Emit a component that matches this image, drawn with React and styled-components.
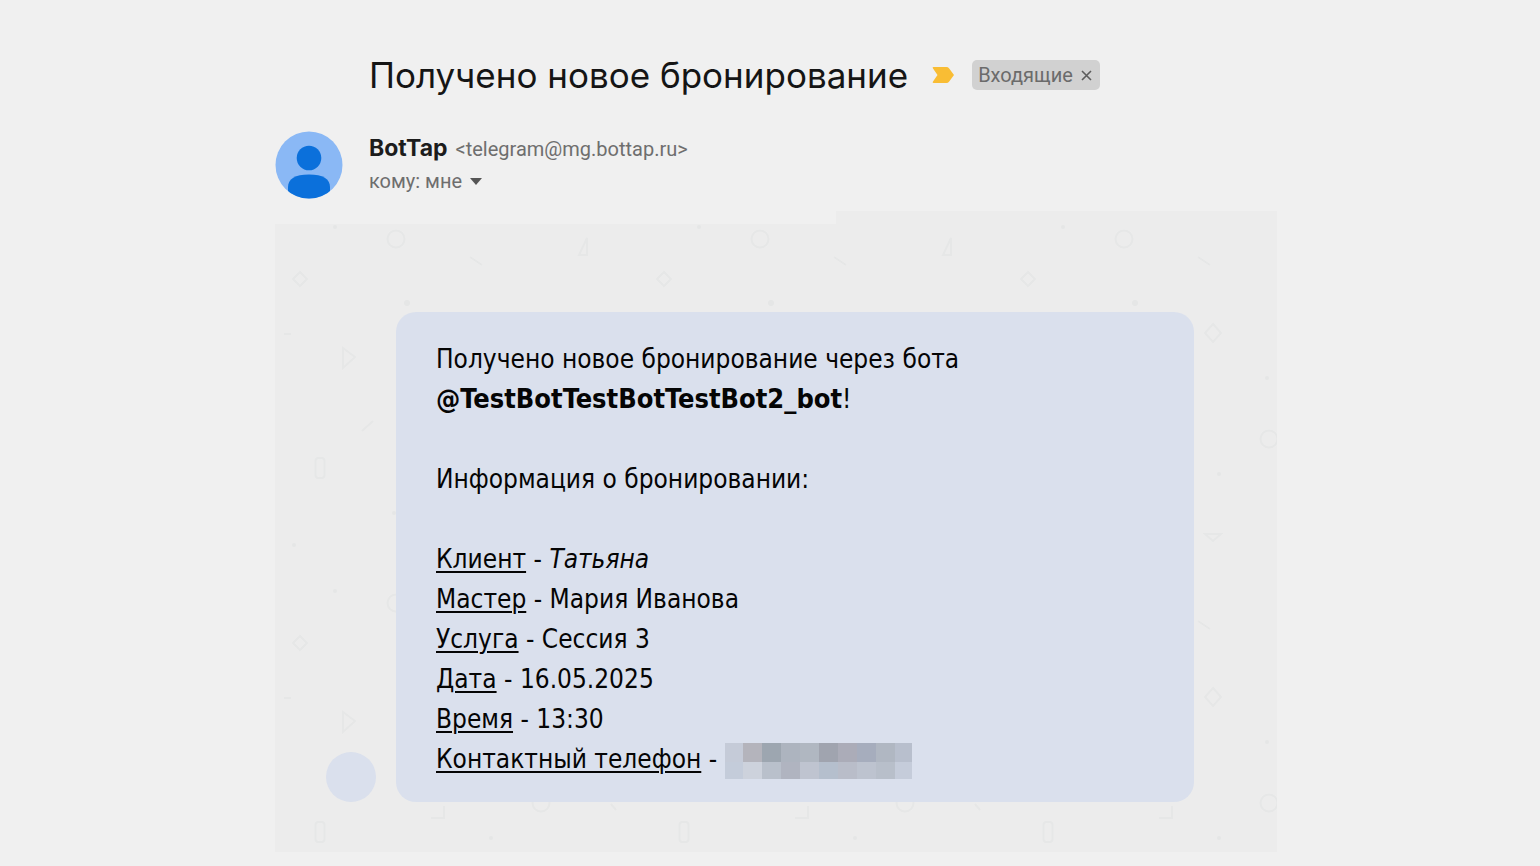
import styled, { createGlobalStyle } from 'styled-components'

const details = [
    { label: 'Клиент', value: <em>Татьяна</em> },
    { label: 'Мастер', value: 'Мария Иванова' },
    { label: 'Услуга', value: 'Сессия 3' },
    { label: 'Дата', value: '16.05.2025' },
    { label: 'Время', value: '13:30' },
]

// two rows of blurred blocks over the phone number
const phoneBlocks = [
    '#c5cbd8', '#b4b4bc', '#9da6b0', '#adb4bf', '#b0b7c1', '#a0a4af', '#abacb8', '#a6adbd', '#b0b7c2', '#b8bfcd',
    '#c4ccda', '#cdd2dc', '#b9c0cb', '#b0b4c0', '#bfc4d0', '#b5bfcd', '#b9bdc9', '#bdc3cf', '#b8bfca', '#c5ccda',
]

const Avatar = () => (
    <AvatarSvg viewBox="0 0 68 68" aria-hidden="true">
        <clipPath id="face"><circle cx="34" cy="34" r="33.500" /></clipPath>
        <circle cx="34" cy="34" r="33.500" fill="#8ab8f5" />
        <g clipPath="url(#face)" fill="#0b70db">
            <circle cx="34" cy="27" r="12.300" />
            <path d="M13 68V56C13 48 20 43.500 34 43.500S55 48 55 56V68Z" />
        </g>
    </AvatarSvg>
)

// faint doodles, repeated every 364px
const Doodles = () => (
    <DoodlesSvg aria-hidden="true">
        <defs>
            <pattern id="doodles" width="364" height="364" patternUnits="userSpaceOnUse">
                <g fill="none" stroke="#e6e7e7" strokeWidth="2">
                    <circle cx="121" cy="15" r="8.500" />
                    <path d="M304 31H312V14Z" />
                    <path d="M195 33L207 41" />
                    <path d="M25 48L32 55L25 62L18 55Z" />
                    <path d="M9 110H16" />
                    <path d="M68 124L80 133L68 144Z" />
                    <path d="M87 207L98 197" />
                    <rect x="40.500" y="234" width="9" height="20" rx="3" />
                    <path d="M210 100L218 109L210 118L202 109Z" />
                    <path d="M202 310H218L210 317Z" />
                    <circle cx="266" cy="215" r="8.500" />
                    <path d="M156 230H169V218" />
                    <path d="M336 216L341 222" />
                </g>
                <g fill="#e5e6e6">
                    <circle cx="60" cy="3" r="2" />
                    <circle cx="132" cy="79" r="3" />
                    <circle cx="119" cy="289" r="2" />
                    <circle cx="19" cy="321" r="2" />
                    <circle cx="264" cy="154" r="2" />
                    <circle cx="216" cy="250" r="2" />
                </g>
            </pattern>
        </defs>
        <rect width="100%" height="100%" fill="url(#doodles)" />
    </DoodlesSvg>
)

const App = () => {
    return (
        <Page>
            <GlobalStyle />
            <TitleRow>
                <Title>Получено новое бронирование</Title>
                <Marker viewBox="0 0 22 18" aria-hidden="true">
                    <path d="M1.500 1H14.500Q16 1 17 2.200L22 9L17 15.800Q16 17 14.500 17H1.500Q0 17 1 15.600L5.500 9L1 2.400Q0 1 1.500 1Z" fill="#f9bd34" />
                </Marker>
                <Label>
                    Входящие
                    <LabelClose type="button" aria-label="Убрать ярлык">
                        <svg width="11" height="11" viewBox="0 0 11 11">
                            <path d="M1 1L10 10M10 1L1 10" stroke="#5c5c5c" strokeWidth="1.600" />
                        </svg>
                    </LabelClose>
                </Label>
            </TitleRow>

            <Sender>
                <Avatar />
                <div>
                    <From>
                        <Name>BotTap</Name>
                        <span>&lt;telegram@mg.bottap.ru&gt;</span>
                    </From>
                    <Recipient type="button">
                        кому: мне
                        <svg width="12" height="7" viewBox="0 0 12 7">
                            <path d="M0 0H12L6 7Z" fill="#555" />
                        </svg>
                    </Recipient>
                </div>
            </Sender>

            <Ledge />
            <Chat>
                <Doodles />
                <BotPhoto />
                <Bubble>
                    <p>
                        Получено новое бронирование через бота<br />
                        <b>@TestBotTestBotTestBot2_bot</b>!
                    </p>
                    <p>Информация о бронировании:</p>
                    <ul>
                        {details.map((item) => (
                            <li key={item.label}><u>{item.label}</u> - {item.value}</li>
                        ))}
                        <li>
                            <u>Контактный телефон</u> -{' '}
                            <HiddenPhone>
                                {phoneBlocks.map((color, i) => <Block key={i} $color={color} />)}
                            </HiddenPhone>
                        </li>
                    </ul>
                </Bubble>
            </Chat>
        </Page>
    )
}

const GlobalStyle = createGlobalStyle`
* {
    box-sizing: border-box;
}
body {
    margin: 0;
    background: #f0f0f0;
    font-family: Roboto, "Liberation Sans", sans-serif;
}
h1, p, ul {
    margin: 0;
    padding: 0;
}
ul {
    list-style: none;
}
button {
    padding: 0;
    border: 0;
    background: none;
    color: inherit;
    font: inherit;
    cursor: pointer;
}
`

const Page = styled.main`
    padding: 52px 263px 14px 275px;
`

const TitleRow = styled.header`
    display: flex;
    align-items: center;
    padding-left: 94px;
`

const Title = styled.h1`
    color: #151515;
    font: 400 35px/46px Inter, sans-serif;
`

const Marker = styled.svg`
    width: 22px;
    height: 18px;
    margin: 0 18px 0 24px;
`

const Label = styled.span`
    display: flex;
    align-items: center;
    gap: 8px;
    height: 30px;
    padding: 0 8px 0 6px;
    border-radius: 5px;
    background: #d1d1d1;
    color: #6b6b6b;
    font-size: 20px;
`

const LabelClose = styled.button`
    display: flex;
`

const Sender = styled.section`
    display: flex;
    gap: 26px;
    margin-top: 33px;
    color: #6e6e6e;
    font-size: 20px;
`

const AvatarSvg = styled.svg`
    width: 68px;
    height: 68px;
`

const From = styled.div`
    display: flex;
    align-items: baseline;
    gap: 8px;
    line-height: 34px;
`

const Name = styled.strong`
    color: #1c1c1c;
    font: 700 23px/34px Inter, sans-serif;
`

const Recipient = styled.button`
    display: flex;
    align-items: center;
    gap: 8px;
    line-height: 30px;
`

// the chat background starts a little higher on the right side
const Ledge = styled.div`
    width: 44%;
    height: 13px;
    margin: 12px 0 0 auto;
    background: #ececec;
`

const Chat = styled.section`
    position: relative;
    display: flex;
    align-items: flex-end;
    gap: 20px;
    padding: 88px 83px 50px 51px;
    background: #ececec;
`

const DoodlesSvg = styled.svg`
    position: absolute;
    inset: 0;
    width: 100%;
    height: 100%;
`

const BotPhoto = styled.div`
    position: relative;
    flex: none;
    width: 50px;
    height: 50px;
    border-radius: 50%;
    background: #dae0ed;
`

const Bubble = styled.article`
    position: relative;
    flex: 1;
    padding: 27px 40px 23px;
    border-radius: 20px;
    background: #dae0ed;
    color: #050505;
    font: 26px/40px "DejaVu Sans Condensed", "DejaVu Sans", sans-serif;

    p {
        margin-bottom: 40px;
    }
    b {
        font-size: 27px;
        line-height: 1;
    }
    u {
        text-decoration-thickness: 2px;
        text-underline-offset: 3px;
    }
`

const HiddenPhone = styled.span`
    display: inline-grid;
    grid-template-columns: 18px repeat(8, 19px) 17px;
    grid-template-rows: 19px 17px;
    vertical-align: middle;
`

const Block = styled.span`
    background: ${(props) => props.$color};
`

export default App
